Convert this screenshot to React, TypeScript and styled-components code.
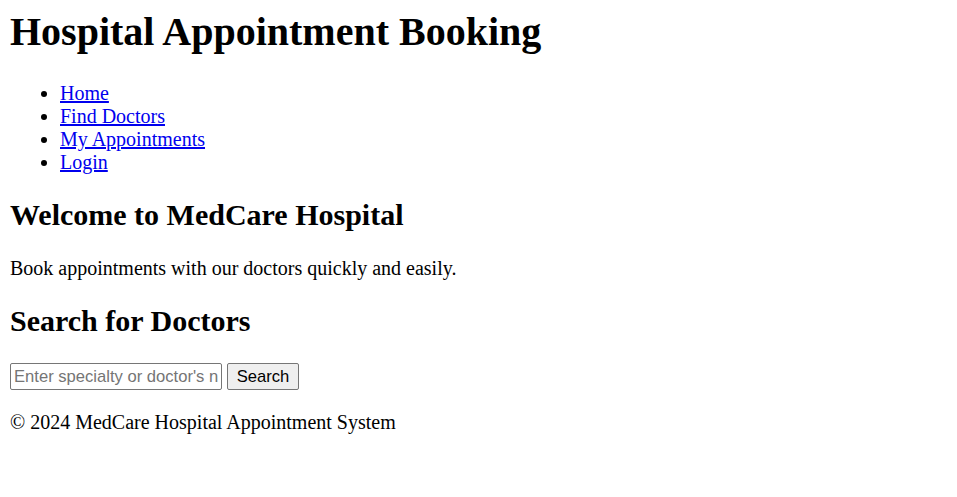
import React from "react";
import styled, { createGlobalStyle } from "styled-components";

const GlobalStyle = createGlobalStyle`
  html, body {
    margin: 0;
    padding: 0;
    background: #ffffff;
  }
  body {
    padding: 8px 10px 10px;
    font-family: "Liberation Serif", "Times New Roman", serif;
    font-size: 20px;
    color: #000000;
  }
`;

const Title = styled.h1`
  font-size: 40px;
  font-weight: bold;
  margin: 0 0 27px;
`;

const NavList = styled.ul`
  margin: 0 0 20px;
  padding-left: 50px;
  list-style: disc;
`;

const NavItem = styled.li`
  line-height: 23px;
`;

const NavLink = styled.a`
  color: #0000ee;
  text-decoration: underline;
`;

const SectionTitle = styled.h2`
  font-size: 30px;
  font-weight: bold;
  margin: 24px 0 25px;
`;

const Text = styled.p`
  margin: 20px 0;
`;

const SearchForm = styled.form`
  display: flex;
  align-items: center;
  gap: 5px;
  margin: 20px 0;
`;

const SearchInput = styled.input`
  width: 212px;
  height: 27px;
  box-sizing: border-box;
  padding: 1px 3px;
  border: 1px solid #767676;
  border-radius: 2px;
  font-family: "Liberation Sans", Arial, sans-serif;
  font-size: 16.6px;
  color: #000;
  &::placeholder {
    color: #757575;
  }
`;

const SearchButton = styled.button`
  width: 72px;
  height: 27px;
  box-sizing: border-box;
  padding: 1px 8px;
  border: 1px solid #767676;
  border-radius: 2px;
  background: #efefef;
  font-family: "Liberation Sans", Arial, sans-serif;
  font-size: 16.6px;
  color: #000;
`;

const Footer = styled.footer`
  margin: 21px 0 20px;
`;

const FooterText = styled.p`
  margin: 0;
`;

const links = ["Home", "Find Doctors", "My Appointments", "Login"];

const App: React.FC = () => {
  return (
    <>
      <GlobalStyle />
      <header>
        <Title>Hospital Appointment Booking</Title>
        <nav>
          <NavList>
            {links.map((link) => (
              <NavItem key={link}>
                <NavLink href="#">{link}</NavLink>
              </NavItem>
            ))}
          </NavList>
        </nav>
      </header>
      <main>
        <section>
          <SectionTitle>Welcome to MedCare Hospital</SectionTitle>
          <Text>Book appointments with our doctors quickly and easily.</Text>
        </section>
        <section>
          <SectionTitle>Search for Doctors</SectionTitle>
          <SearchForm onSubmit={(e) => e.preventDefault()}>
            <SearchInput type="text" placeholder="Enter specialty or doctor's name" />
            <SearchButton type="submit">Search</SearchButton>
          </SearchForm>
        </section>
      </main>
      <Footer>
        <FooterText>© 2024 MedCare Hospital Appointment System</FooterText>
      </Footer>
    </>
  );
};

export default App;
